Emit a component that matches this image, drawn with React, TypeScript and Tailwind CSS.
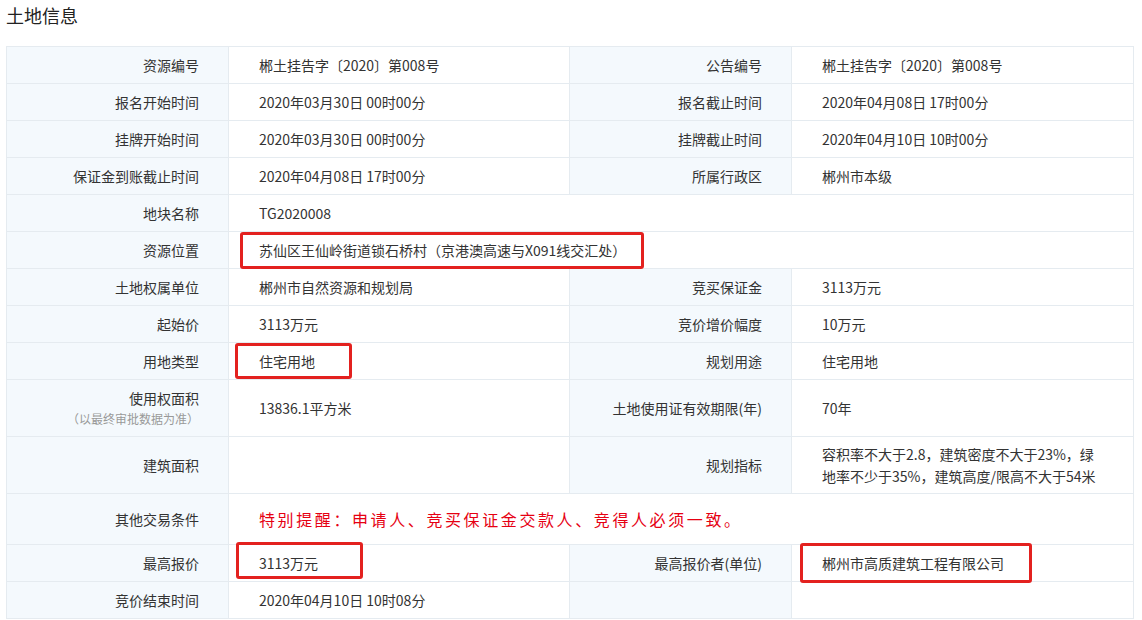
import React from "react";

// 土地信息 — land parcel detail table with red annotation boxes on top.

type Cell = { label: string; value?: React.ReactNode; note?: string };
type Row =
  | { kind: "pair"; left: Cell; right: Cell; h?: number }
  | { kind: "wide"; left: Cell; h?: number };

const rows: Row[] = [
  { kind: "pair", left: { label: "资源编号", value: "郴土挂告字〔2020〕第008号" }, right: { label: "公告编号", value: "郴土挂告字〔2020〕第008号" } },
  { kind: "pair", left: { label: "报名开始时间", value: "2020年03月30日 00时00分" }, right: { label: "报名截止时间", value: "2020年04月08日 17时00分" } },
  { kind: "pair", left: { label: "挂牌开始时间", value: "2020年03月30日 00时00分" }, right: { label: "挂牌截止时间", value: "2020年04月10日 10时00分" } },
  { kind: "pair", left: { label: "保证金到账截止时间", value: "2020年04月08日 17时00分" }, right: { label: "所属行政区", value: "郴州市本级" } },
  { kind: "wide", left: { label: "地块名称", value: "TG2020008" } },
  { kind: "wide", left: { label: "资源位置", value: "苏仙区王仙岭街道锁石桥村（京港澳高速与X091线交汇处）" } },
  { kind: "pair", left: { label: "土地权属单位", value: "郴州市自然资源和规划局" }, right: { label: "竞买保证金", value: "3113万元" } },
  { kind: "pair", left: { label: "起始价", value: "3113万元" }, right: { label: "竞价增价幅度", value: "10万元" } },
  { kind: "pair", left: { label: "用地类型", value: "住宅用地" }, right: { label: "规划用途", value: "住宅用地" } },
  { kind: "pair", h: 57, left: { label: "使用权面积", note: "（以最终审批数据为准）", value: "13836.1平方米" }, right: { label: "土地使用证有效期限(年)", value: "70年" } },
  {
    kind: "pair",
    h: 57,
    left: { label: "建筑面积", value: "" },
    right: {
      label: "规划指标",
      value: (
        <>
          容积率不大于2.8，建筑密度不大于23%，绿
          <br />
          地率不少于35%，建筑高度/限高不大于54米
        </>
      ),
    },
  },
  {
    kind: "wide",
    h: 51,
    left: {
      label: "其他交易条件",
      value: (
        <span className="text-[16px] font-normal tracking-[2.6px] text-[#e60012]">
          特别提醒：申请人、竞买保证金交款人、竞得人必须一致。
        </span>
      ),
    },
  },
  { kind: "pair", left: { label: "最高报价", value: "3113万元" }, right: { label: "最高报价者(单位)", value: "郴州市高质建筑工程有限公司" } },
  { kind: "pair", left: { label: "竞价结束时间", value: "2020年04月10日 10时08分" }, right: { label: "", value: "" } },
];

const labelCls = "border border-[#e5ebf0] bg-[#f4f9fd] pr-[29px] text-right align-middle";
const valueCls = "border border-[#e5ebf0] bg-white pl-[30px] pr-[20px] text-left align-middle leading-[22px]";

function Label({ c }: { c: Cell }) {
  return (
    <td className={labelCls}>
      <div>{c.label}</div>
      {c.note && <div className="mt-[1px] text-[12px] leading-[18px] text-[#999]">{c.note}</div>}
    </td>
  );
}

function Mark({ x, y, w, h }: { x: number; y: number; w: number; h: number }) {
  return (
    <div
      className="pointer-events-none absolute rounded-[3px] border-[3px] border-[#e3211f]"
      style={{ left: x, top: y, width: w, height: h }}
    />
  );
}

export default function App() {
  return (
    <div
      className="relative h-[620px] w-[1142px] overflow-hidden bg-white text-[14px] text-[#333]"
      style={{ fontFamily: '"Microsoft YaHei", "Noto Sans CJK SC", sans-serif' }}
    >
      <h2 className="pl-[6px] pt-[2px] text-[18px] leading-[26px] text-[#222]">土地信息</h2>

      <table className="ml-[6px] mt-[18px] w-[1127px] table-fixed border-collapse">
        <colgroup>
          <col className="w-[222px]" />
          <col className="w-[341px]" />
          <col className="w-[222px]" />
          <col className="w-[342px]" />
        </colgroup>
        <tbody>
          {rows.map((r, i) => (
            <tr key={i} style={{ height: r.h ?? 37 }}>
              <Label c={r.left} />
              {r.kind === "pair" ? (
                <>
                  <td className={valueCls}>{r.left.value}</td>
                  <Label c={r.right} />
                  <td className={valueCls}>{r.right.value}</td>
                </>
              ) : (
                <td colSpan={3} className={valueCls}>{r.left.value}</td>
              )}
            </tr>
          ))}
        </tbody>
      </table>

      {/* red annotation boxes */}
      <Mark x={240} y={232} w={404} h={37} />
      <Mark x={235} y={343} w={117} h={36} />
      <Mark x={236} y={542} w={127} h={37} />
      <Mark x={800} y={543} w={232} h={40} />
    </div>
  );
}
